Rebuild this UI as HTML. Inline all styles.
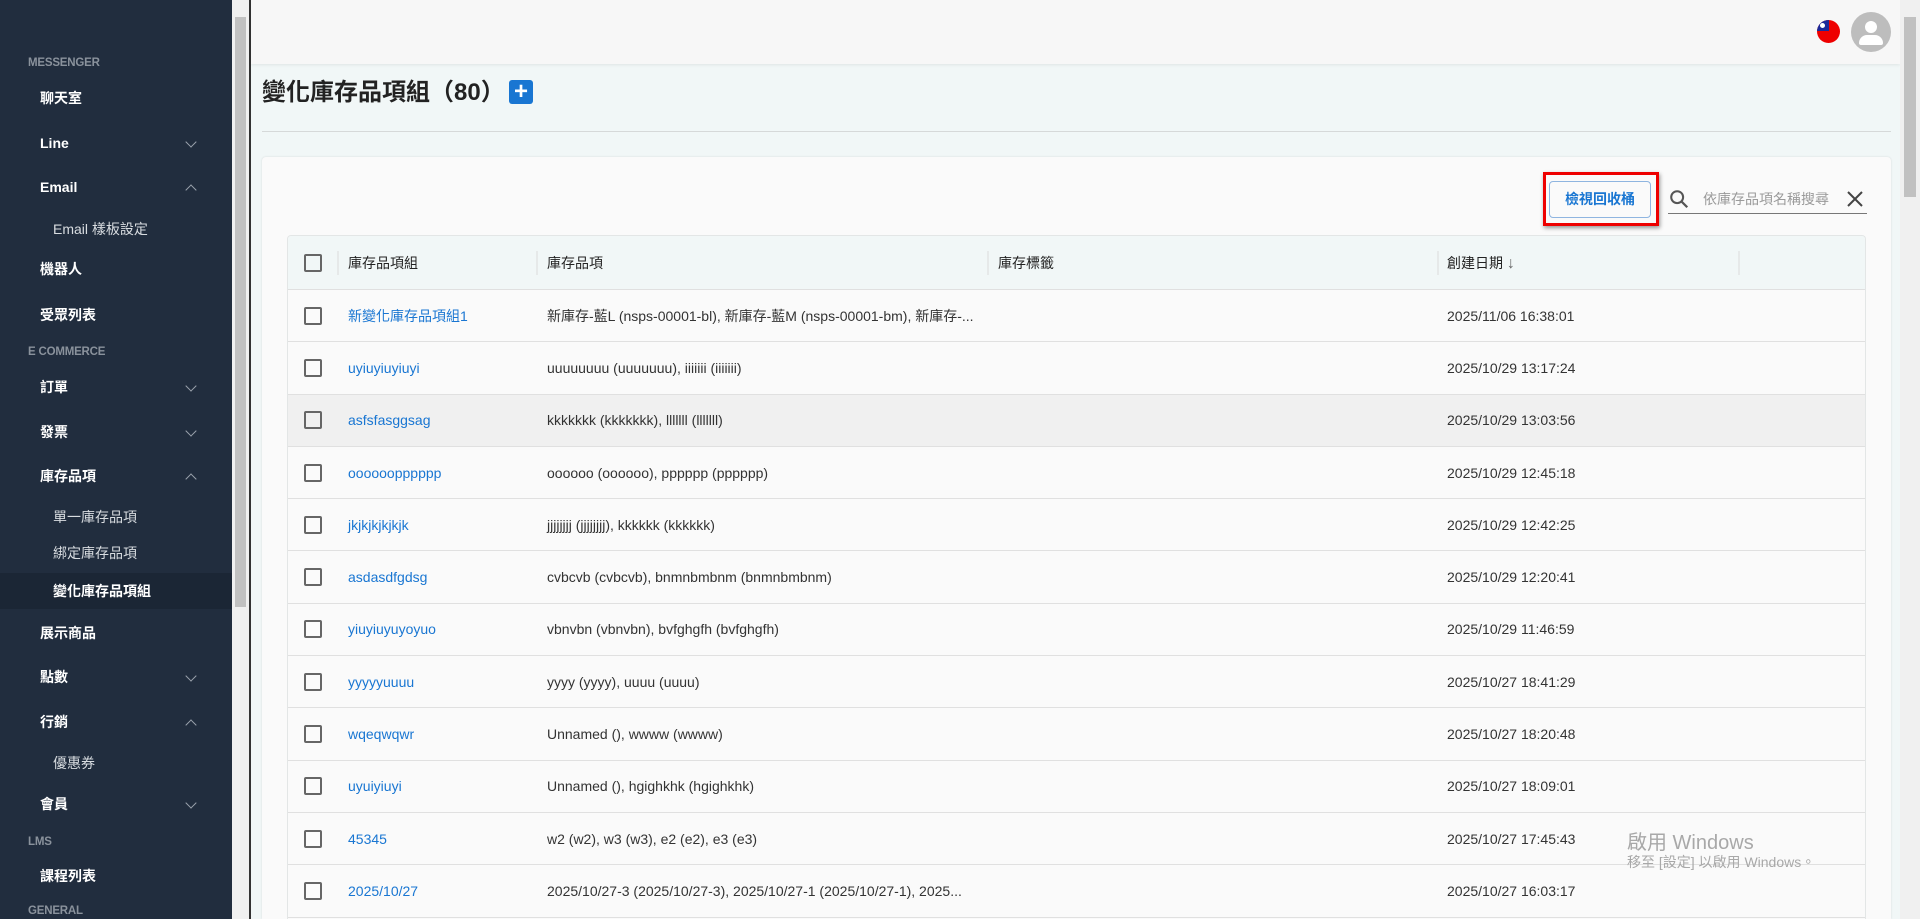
<!DOCTYPE html>
<html><head><meta charset="utf-8"><style>
*{box-sizing:border-box;margin:0;padding:0}
html{width:1920px;height:919px;overflow:hidden}
body{width:1920px;height:919px;overflow:hidden;font-family:"Liberation Sans","Noto Sans CJK TC",sans-serif;background:#f7f7f7;position:relative;color:#222}
.sb{position:absolute;left:0;top:0;width:232px;height:919px;background:#212d3e;color:#fff;overflow:hidden}
.sb div{position:absolute;left:0;width:232px;font-size:14px;line-height:20px}
.sb .sec{left:28px;font-size:11.5px;color:#8a929c;font-weight:bold;letter-spacing:-0.2px;line-height:15px}
.sb .it{padding-left:40px;font-weight:bold}
.sb .sub{padding-left:53px;color:#d8dce0}
.sb .chev{position:absolute;left:187px;top:5px;width:8px;height:8px;border-right:1.5px solid #9aa2ac;border-bottom:1.5px solid #9aa2ac;transform:rotate(45deg)}
.sb .up{transform:rotate(-135deg);top:9px}
.sbs{position:absolute;left:232px;top:0;width:17px;height:919px;background:#f0f0f0}
.sbs i{position:absolute;left:3px;top:17px;width:11px;height:590px;background:#c1c1c1}
.rs{position:absolute;left:1900px;top:0;width:20px;height:919px;background:#f0f0f0}
.rs i{position:absolute;left:4px;top:17px;width:12px;height:180px;background:#c1c1c1}
.line{position:absolute;left:249px;top:0;width:2px;height:919px;background:#333}
.top{position:absolute;left:251px;top:0;width:1649px;height:64px;background:#f7f7f7;box-shadow:0 1px 3px rgba(0,0,0,.08)}
.main{position:absolute;left:251px;top:64px;width:1649px;height:855px;background:#f1f7f7}
.card{position:absolute;left:262px;top:157px;width:1629px;height:762px;background:#fafafa;border-radius:4px 4px 0 0;box-shadow:0 0 2px rgba(0,0,0,.12)}
.tbl{position:absolute;left:287px;top:235px;width:1579px;height:684px;border:1px solid #e3e6e6;border-bottom:none;border-radius:4px 4px 0 0;overflow:hidden;background:#fafafa}
.hd{height:54px;background:#f1f7f7;border-bottom:1px solid #e0e0e0;position:relative;font-size:14px}
.row{height:52.3px;border-bottom:1px solid #e0e0e0;position:relative;font-size:14px;color:#333}
.c{position:absolute;top:50%;transform:translateY(-50%);white-space:nowrap}
.cb{position:absolute;left:16px;top:50%;margin-top:-9px;width:18px;height:18px;border:2px solid #666;border-radius:2px}
.a{color:#1976d2}
.sep{position:absolute;top:15px;width:2px;height:24px;background:#e6e9e9}
</style></head><body>
<div class="sb">
<div class="sec" style="top:56px">MESSENGER</div>
<div class="it" style="top:88px">聊天室</div>
<div class="it" style="top:133px">Line<span class="chev"></span></div>
<div class="it" style="top:177px">Email<span class="chev up"></span></div>
<div class="sub" style="top:219px">Email 樣板設定</div>
<div class="it" style="top:259px">機器人</div>
<div class="it" style="top:305px">受眾列表</div>
<div class="sec" style="top:345px">E COMMERCE</div>
<div class="it" style="top:377px">訂單<span class="chev"></span></div>
<div class="it" style="top:422px">發票<span class="chev"></span></div>
<div class="it" style="top:466px">庫存品項<span class="chev up"></span></div>
<div class="sub" style="top:507px">單一庫存品項</div>
<div class="sub" style="top:543px">綁定庫存品項</div>
<div style="top:573px;height:36px;background:#1b2635"></div>
<div class="sub" style="top:581px;color:#fff;font-weight:bold">變化庫存品項組</div>
<div class="it" style="top:623px">展示商品</div>
<div class="it" style="top:667px">點數<span class="chev"></span></div>
<div class="it" style="top:712px">行銷<span class="chev up"></span></div>
<div class="sub" style="top:753px">優惠券</div>
<div class="it" style="top:794px">會員<span class="chev"></span></div>
<div class="sec" style="top:835px">LMS</div>
<div class="it" style="top:866px">課程列表</div>
<div class="sec" style="top:904px">GENERAL</div>
</div>
<div class="sbs"><i></i></div>
<div class="line"></div>
<div class="main"></div>
<div class="top"></div>
<div style="position:absolute;left:1817px;top:20px;width:23px;height:23px;border-radius:50%;background:#e00;overflow:hidden"><div style="width:12px;height:11px;background:#1a2a9a"></div><div style="position:absolute;left:3px;top:3px;width:5px;height:5px;border-radius:50%;background:#fff"></div></div>
<div style="position:absolute;left:1851px;top:12px;width:40px;height:40px;border-radius:50%;background:#bdbdbd;overflow:hidden"><div style="position:absolute;left:14px;top:9px;width:12px;height:12px;border-radius:50%;background:#fff"></div><div style="position:absolute;left:8px;top:23px;width:24px;height:10px;border-radius:8px 8px 2px 2px;background:#fff"></div></div>
<div style="position:absolute;left:262px;top:79px;font-size:24px;font-weight:bold;color:#222;line-height:28px">變化庫存品項組（80）</div>
<div style="position:absolute;left:509px;top:80px;width:24px;height:24px;background:#1976d2;border-radius:3px;color:#fff;font-size:24px;line-height:23px;text-align:center;font-weight:bold">+</div>
<div style="position:absolute;left:262px;top:131px;width:1629px;height:1px;background:#d6d9d9"></div>
<div class="card"></div>
<div style="position:absolute;left:1543px;top:172px;width:116px;height:54px;border:3px solid #e00;box-shadow:1px 2px 4px rgba(0,0,0,.4)"></div>
<div style="position:absolute;left:1549px;top:181px;width:102px;height:37px;border:1px solid #8fb5e0;border-radius:4px;background:#fafafa;color:#1976d2;font-size:14px;font-weight:bold;text-align:center;line-height:35px">檢視回收桶</div>
<svg style="position:absolute;left:1668px;top:188px" width="22" height="22" viewBox="0 0 24 24"><circle cx="10" cy="10" r="6.5" fill="none" stroke="#555" stroke-width="2.2"/><path d="M15 15l6 6" stroke="#555" stroke-width="2.5"/></svg>
<div style="position:absolute;left:1703px;top:189px;font-size:14px;color:#9a9a9a">依庫存品項名稱搜尋</div>
<svg style="position:absolute;left:1846px;top:190px" width="18" height="18" viewBox="0 0 18 18"><path d="M2 2l14 14M16 2L2 16" stroke="#444" stroke-width="2"/></svg>
<div style="position:absolute;left:1668px;top:213px;width:199px;height:1px;background:#777"></div>
<div class="tbl">
<div class="hd"><span class="cb"></span><span class="sep" style="left:49px"></span><span class="c" style="left:60px">庫存品項組</span><span class="sep" style="left:248px"></span><span class="c" style="left:259px">庫存品項</span><span class="sep" style="left:699px"></span><span class="c" style="left:710px">庫存標籤</span><span class="sep" style="left:1149px"></span><span class="c" style="left:1159px">創建日期 <span style="color:#666;font-size:16px">↓</span></span><span class="sep" style="left:1450px"></span></div>
<div class="row"><span class="cb"></span><span class="c a" style="left:60px">新變化庫存品項組1</span><span class="c" style="left:259px">新庫存-藍L (nsps-00001-bl), 新庫存-藍M (nsps-00001-bm), 新庫存-...</span><span class="c" style="left:1159px">2025/11/06 16:38:01</span></div>
<div class="row"><span class="cb"></span><span class="c a" style="left:60px">uyiuyiuyiuyi</span><span class="c" style="left:259px">uuuuuuuu (uuuuuuu), iiiiiii (iiiiiii)</span><span class="c" style="left:1159px">2025/10/29 13:17:24</span></div>
<div class="row" style="background:#f0f0f0"><span class="cb"></span><span class="c a" style="left:60px">asfsfasggsag</span><span class="c" style="left:259px">kkkkkkk (kkkkkkk), lllllll (lllllll)</span><span class="c" style="left:1159px">2025/10/29 13:03:56</span></div>
<div class="row"><span class="cb"></span><span class="c a" style="left:60px">oooooopppppp</span><span class="c" style="left:259px">oooooo (oooooo), pppppp (pppppp)</span><span class="c" style="left:1159px">2025/10/29 12:45:18</span></div>
<div class="row"><span class="cb"></span><span class="c a" style="left:60px">jkjkjkjkjkjk</span><span class="c" style="left:259px">jjjjjjjj (jjjjjjjj), kkkkkk (kkkkkk)</span><span class="c" style="left:1159px">2025/10/29 12:42:25</span></div>
<div class="row"><span class="cb"></span><span class="c a" style="left:60px">asdasdfgdsg</span><span class="c" style="left:259px">cvbcvb (cvbcvb), bnmnbmbnm (bnmnbmbnm)</span><span class="c" style="left:1159px">2025/10/29 12:20:41</span></div>
<div class="row"><span class="cb"></span><span class="c a" style="left:60px">yiuyiuyuyoyuo</span><span class="c" style="left:259px">vbnvbn (vbnvbn), bvfghgfh (bvfghgfh)</span><span class="c" style="left:1159px">2025/10/29 11:46:59</span></div>
<div class="row"><span class="cb"></span><span class="c a" style="left:60px">yyyyyuuuu</span><span class="c" style="left:259px">yyyy (yyyy), uuuu (uuuu)</span><span class="c" style="left:1159px">2025/10/27 18:41:29</span></div>
<div class="row"><span class="cb"></span><span class="c a" style="left:60px">wqeqwqwr</span><span class="c" style="left:259px">Unnamed (), wwww (wwww)</span><span class="c" style="left:1159px">2025/10/27 18:20:48</span></div>
<div class="row"><span class="cb"></span><span class="c a" style="left:60px">uyuiyiuyi</span><span class="c" style="left:259px">Unnamed (), hgighkhk (hgighkhk)</span><span class="c" style="left:1159px">2025/10/27 18:09:01</span></div>
<div class="row"><span class="cb"></span><span class="c a" style="left:60px">45345</span><span class="c" style="left:259px">w2 (w2), w3 (w3), e2 (e2), e3 (e3)</span><span class="c" style="left:1159px">2025/10/27 17:45:43</span></div>
<div class="row"><span class="cb"></span><span class="c a" style="left:60px">2025/10/27</span><span class="c" style="left:259px">2025/10/27-3 (2025/10/27-3), 2025/10/27-1 (2025/10/27-1), 2025...</span><span class="c" style="left:1159px">2025/10/27 16:03:17</span></div>
</div>
<div style="position:absolute;left:1627px;top:826px;font-size:20px;color:#a8a8a8">啟用 Windows</div>
<div style="position:absolute;left:1627px;top:852px;font-size:14px;color:#a8a8a8">移至 [設定] 以啟用 Windows。</div>
<div class="rs"><i></i></div>
</body></html>
